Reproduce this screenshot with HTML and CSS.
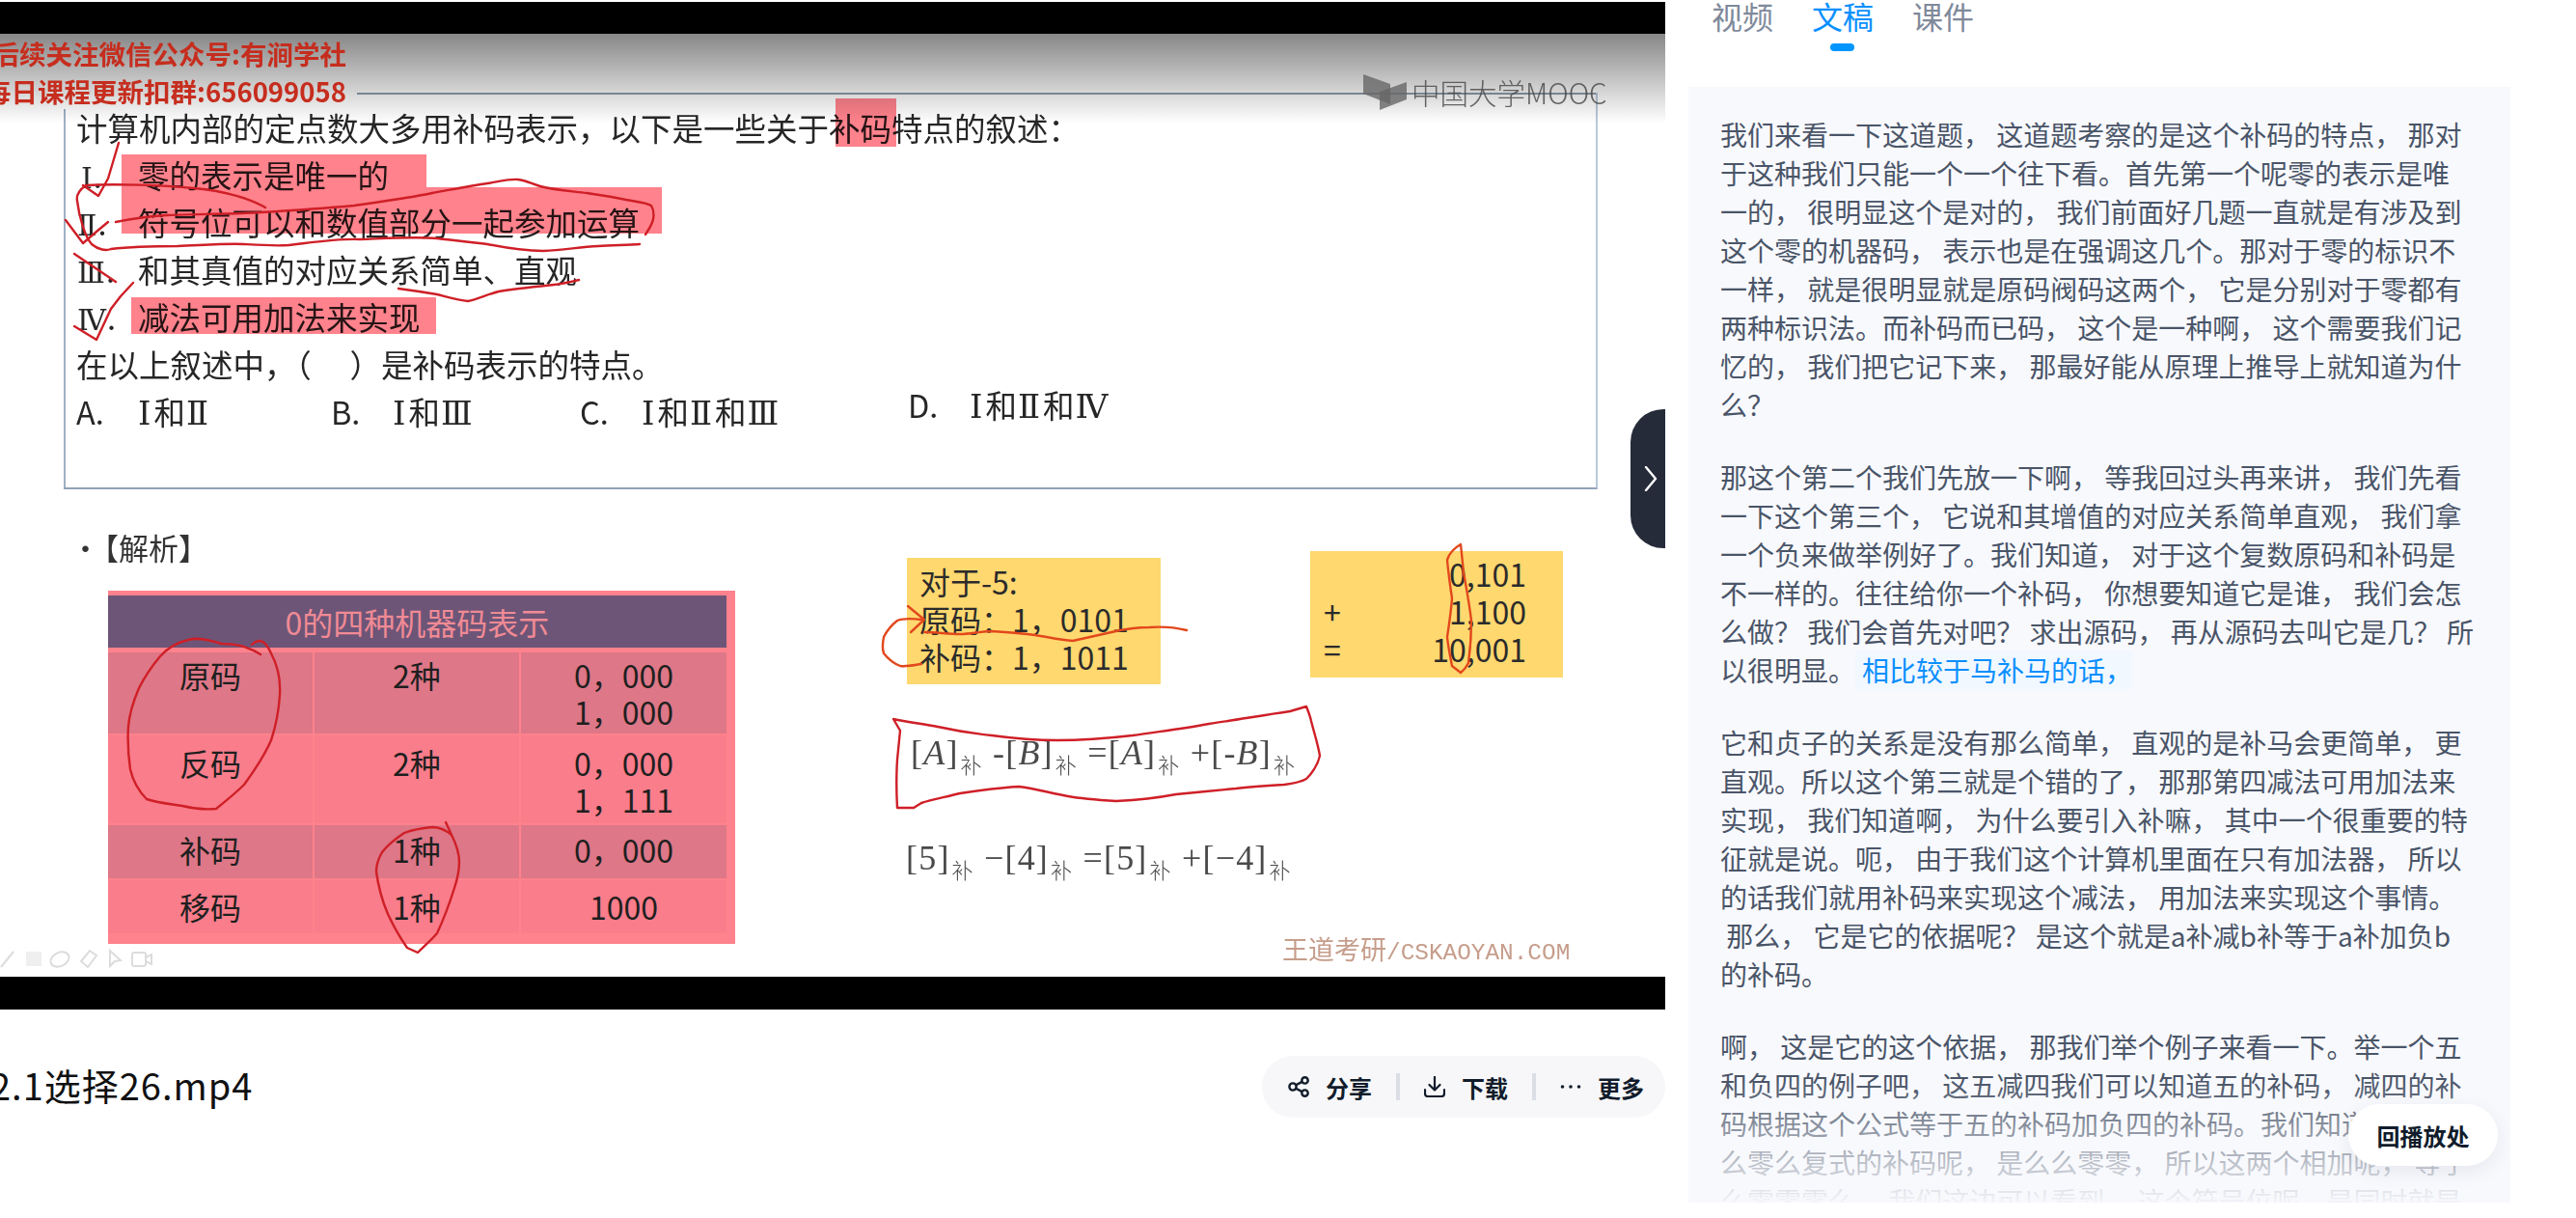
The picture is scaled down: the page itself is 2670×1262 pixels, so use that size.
FILE: index.html

```html
<!DOCTYPE html>
<html lang="zh-CN">
<head>
    <meta charset="UTF-8">
    <title>2.1选择26.mp4</title>
    <link rel="stylesheet" href="styles.css">
</head>
<body>
    <div class="page">
        <main class="main-col">
            <div class="video">
                <div class="slide">
                    <div class="q-box">
                        <div class="q-line">计算机内部的定点数大多用补码表示&#65292;以下是一些关于补码特点的叙述&#65306;</div>
                        <div class="q-line q-row"><span class="q-key q-key-one"><span class="num">Ⅰ</span>.</span><span>零的表示是唯一的</span></div>
                        <div class="q-line q-row"><span class="q-key"><span class="num">Ⅱ</span>.</span><span>符号位可以和数值部分一起参加运算</span></div>
                        <div class="q-line q-row"><span class="q-key"><span class="num">Ⅲ</span>.</span><span>和其真值的对应关系简单、直观</span></div>
                        <div class="q-line q-row"><span class="q-key"><span class="num">Ⅳ</span>.</span><span>减法可用加法来实现</span></div>
                        <div class="q-line">在以上叙述中&#65292;&#65288;&#12288;&nbsp;&#65289;是补码表示的特点。</div>
                        <div class="q-options">
                            <div class="q-opt"><span class="q-opt-key">A.</span><span class="num">Ⅰ</span>和<span class="num">Ⅱ</span></div>
                            <div class="q-opt"><span class="q-opt-key">B.</span><span class="num">Ⅰ</span>和<span class="num">Ⅲ</span></div>
                            <div class="q-opt"><span class="q-opt-key">C.</span><span class="num">Ⅰ</span>和<span class="num">Ⅱ</span>和<span class="num">Ⅲ</span></div>
                            <div class="q-opt q-opt-d"><span class="q-opt-key">D.</span><span class="num">Ⅰ</span>和<span class="num">Ⅱ</span>和<span class="num">Ⅳ</span></div>
                        </div>
                    </div>

                    <div class="mark mark-kw"></div>
                    <div class="mark mark-one"></div>
                    <div class="mark mark-two"></div>
                    <div class="mark mark-four"></div>

                    <div class="answer-head"><span class="answer-dot">•</span>【解析】</div>

                    <div class="zero-table">
                        <div class="zt-head">0的四种机器码表示</div>
                        <div class="zt-cell zt-dark zt-r1">原码</div>
                        <div class="zt-cell zt-dark zt-r1">2种</div>
                        <div class="zt-cell zt-dark zt-r1">0&#65292;000<br>1&#65292;000</div>
                        <div class="zt-cell zt-r2">反码</div>
                        <div class="zt-cell zt-r2">2种</div>
                        <div class="zt-cell zt-r2">0&#65292;000<br>1&#65292;111</div>
                        <div class="zt-cell zt-dark zt-r3">补码</div>
                        <div class="zt-cell zt-dark zt-r3">1种</div>
                        <div class="zt-cell zt-dark zt-r3">0&#65292;000</div>
                        <div class="zt-cell zt-r4">移码</div>
                        <div class="zt-cell zt-r4">1种</div>
                        <div class="zt-cell zt-r4">1000</div>
                    </div>

                    <div class="note note-codes">
                        <div>对于-5:</div>
                        <div>原码&#65306;1&#65292;0101</div>
                        <div>补码&#65306;1&#65292;1011</div>
                    </div>

                    <div class="note note-sum">
                        <div class="sum-row"><span></span><span>0,101</span></div>
                        <div class="sum-row"><span>+</span><span>1,100</span></div>
                        <div class="sum-row"><span>=</span><span>10,001</span></div>
                    </div>

                    <div class="formula formula-a">[<i>A</i>]<span class="fm-sub">补</span> -[<i>B</i>]<span class="fm-sub">补</span> =[<i>A</i>]<span class="fm-sub">补</span> +[-<i>B</i>]<span class="fm-sub">补</span></div>
                    <div class="formula formula-b">[5]<span class="fm-sub">补</span> −[4]<span class="fm-sub">补</span> =[5]<span class="fm-sub">补</span> +[−4]<span class="fm-sub">补</span></div>

                    <div class="site-mark">王道考研<span class="site-mark-url">/CSKAOYAN.COM</span></div>

                    <div class="top-fade"></div>

                    <div class="wechat-mark">
                        <div>后续关注微信公众号:有涧学社</div>
                        <div>每日课程更新扣群:656099058</div>
                    </div>

                    <div class="mooc-mark">
                        <svg width="46" height="38" viewBox="0 0 46 38">
                            <path d="M0 0 L28 10 L28 31 L0 20 Z" fill="#666" opacity="0.8"/>
                            <path d="M45 8 L45 26 L17 37 L17 18 Z" fill="#666" opacity="0.8"/>
                        </svg>
                        <span class="mooc-name">中国大学MOOC</span>
                    </div>

                    <!-- hand drawn pen strokes, coords are page px -->
                    <svg class="ink" width="1726" height="977" viewBox="0 35 1726 977" fill="none">
                        <g stroke="#cf1f27" stroke-width="2.4" stroke-linejoin="round" stroke-linecap="round">
                            <path d="M123 148 L112 185 L102 203 L86 192"/>
                            <path d="M275 215 C262 207 235 198 201 195 C170 192 120 190 89 192 C82 197 79 203 80 208 C82 225 88 245 95 253 C102 259 110 260 115 258 C140 255 160 255 184 255 C210 254 235 252 253 253 C270 254 285 255 299 254 C325 251 350 247 373 248 C400 247 430 245 453 247 C470 249 490 251 505 253 C525 257 545 260 563 260 C585 259 600 256 620 255 C635 254 650 254 663 253"/>
                            <path d="M120 230 C140 226 155 224 172 223 C200 222 240 222 270 220 C305 218 335 216 367 213 C395 209 425 205 448 200 C470 196 490 192 505 190 C518 188 528 185 537 186 C546 187 552 191 560 193 C575 197 592 198 608 200 C622 202 636 204 649 207 C660 209 670 210 675 213 C678 218 678 222 677 227 C676 233 672 238 669 243"/>
                            <path d="M68 228 L86 252 L100 240 L112 230"/>
                            <path d="M77 263 L120 292"/>
                            <path d="M413 299 C428 301 441 303 453 305 C465 308 475 311 485 312 C495 310 505 305 517 302 C535 299 555 297 574 295 C584 294 592 292 600 290"/>
                            <path d="M138 293 L125 307 L115 320 L100 352 L77 338"/>

                            <path d="M270 678 C258 670 244 667 230 667 C217 663 205 660 195 663 C183 666 173 672 166 680 C156 692 149 703 144 713 C138 727 134 740 133 753 C132 768 133 783 135 797 C138 810 144 820 152 828 C164 832 176 833 189 835 C201 838 213 839 224 838 C234 830 244 822 253 813 C264 798 274 783 281 767 C286 752 289 736 290 720 C291 704 288 690 281 677 C278 670 274 665 270 664 C266 664 263 666 261 668"/>
                            <path d="M462 852 L468 865 C462 860 455 857 448 857 C438 858 427 860 419 863 C410 869 402 875 396 883 C392 890 390 896 390 903 C392 918 396 933 402 947 C408 960 415 972 422 982 L433 987 C440 980 447 974 453 967 C460 952 466 936 471 920 C474 911 476 902 476 893 C476 882 472 873 468 865"/>

                            <path d="M926 745 C940 748 956 750 972 753 C990 757 1009 760 1028 762 C1050 765 1073 767 1096 767 C1122 767 1148 765 1174 762 C1200 758 1227 755 1253 750 C1281 746 1309 741 1337 737 L1354 732 C1356 737 1358 742 1359 747 C1362 759 1366 771 1368 783 C1366 792 1361 800 1354 807 C1347 811 1339 812 1331 813 C1314 814 1297 815 1281 817 C1260 819 1240 821 1219 823 C1198 827 1178 829 1157 830 C1140 829 1123 828 1107 825 C1090 822 1073 817 1056 815 C1036 816 1015 819 995 822 C980 826 966 828 955 832 L947 837 L930 837 C929 820 929 803 930 787 L933 757 L926 745 Z"/>
                        </g>
                        <g stroke="#e2481c" stroke-width="2.4" stroke-linejoin="round" stroke-linecap="round">
                            <path d="M955 688 C948 689 940 691 933 690 C925 687 920 682 916 677 C914 671 915 665 916 660 C920 652 925 647 930 643 C938 640 947 641 955 642"/>
                            <path d="M941 628 L958 642 L944 655"/>
                            <path d="M958 655 C970 655 983 657 995 657 C1006 657 1017 654 1028 654 C1043 655 1058 656 1073 658 C1086 660 1099 663 1112 664 C1125 661 1139 658 1152 655 C1165 652 1178 650 1191 650 C1205 649 1218 650 1230 653"/>
                            <path d="M1514 564 C1507 568 1502 574 1500 580 C1501 593 1503 606 1505 620 C1504 633 1502 647 1500 660 C1501 670 1503 680 1505 690 L1514 697 C1518 694 1520 691 1522 687 C1524 672 1525 658 1525 643 C1523 626 1520 610 1517 593 C1516 583 1515 574 1514 564 Z"/>
                        </g>
                        <g stroke="#dcdcdc" stroke-width="2">
                            <path d="M1 1002 L14 986"/>
                            <rect x="27" y="986" width="16" height="15" fill="#efefef" stroke="none"/>
                            <ellipse cx="62" cy="994" rx="10" ry="7" transform="rotate(-25 62 994)"/>
                            <path d="M84 996 L93 985 L100 990 L91 1002 Z"/>
                            <path d="M114 985 L114 1001 L119 996 L125 995 Z"/>
                            <rect x="137" y="987" width="14" height="14" rx="2"/>
                            <path d="M151 992 L157 989 L157 999 L151 996"/>
                        </g>
                    </svg>
                </div>
                <button class="collapse-tab" aria-label="收起">
                    <svg width="14" height="26" viewBox="0 0 14 26" fill="none"><path d="M2 1 L12 13 L2 25" stroke="#fff" stroke-width="2.4" stroke-linecap="round" stroke-linejoin="round"/></svg>
                </button>
            </div>

            <div class="video-meta">
                <div class="video-title">2.1选择26.mp4</div>
                <div class="actions">
                    <div class="action">
                        <svg width="22" height="22" viewBox="0 0 22 22" fill="none" stroke="#111c2b" stroke-width="2.4"><circle cx="5" cy="11" r="3.6"/><circle cx="17.5" cy="4.4" r="3.2"/><circle cx="17.5" cy="17.6" r="3.2"/><path d="M8.2 9.3 L14.6 5.9 M8.2 12.7 L14.6 16.1"/></svg>
                        <span>分享</span>
                    </div>
                    <span class="action-divider"></span>
                    <div class="action">
                        <svg width="22" height="22" viewBox="0 0 22 22" fill="none" stroke="#111c2b" stroke-width="2.2" stroke-linecap="round" stroke-linejoin="round"><path d="M11 1 V14 M5.5 9 L11 14.5 L16.5 9"/><path d="M1 14 V18 C1 20 2 21 4 21 H18 C20 21 21 20 21 18 V14"/></svg>
                        <span>下载</span>
                    </div>
                    <span class="action-divider"></span>
                    <div class="action">
                        <svg width="22" height="22" viewBox="0 0 22 22" fill="#111c2b"><circle cx="2.5" cy="11" r="1.8"/><circle cx="11" cy="11" r="1.8"/><circle cx="19.5" cy="11" r="1.8"/></svg>
                        <span>更多</span>
                    </div>
                </div>
            </div>
        </main>

        <aside class="side-col">
            <nav class="tabs">
                <div class="tab">视频</div>
                <div class="tab tab-active">文稿</div>
                <div class="tab">课件</div>
            </nav>
            <section class="transcript">
                <p>我们来看一下这道题&#65292; 这道题考察的是这个补码的特点&#65292; 那对于这种我们只能一个一个往下看。首先第一个呢零的表示是唯一的&#65292; 很明显这个是对的&#65292; 我们前面好几题一直就是有涉及到这个零的机器码&#65292; 表示也是在强调这几个。那对于零的标识不一样&#65292; 就是很明显就是原码阀码这两个&#65292; 它是分别对于零都有两种标识法。而补码而已码&#65292; 这个是一种啊&#65292; 这个需要我们记忆的&#65292; 我们把它记下来&#65292; 那最好能从原理上推导上就知道为什么&#65311;</p>
                <p>那这个第二个我们先放一下啊&#65292; 等我回过头再来讲&#65292; 我们先看一下这个第三个&#65292; 它说和其增值的对应关系简单直观&#65292; 我们拿一个负来做举例好了。我们知道&#65292; 对于这个复数原码和补码是不一样的。往往给你一个补码&#65292; 你想要知道它是谁&#65292; 我们会怎么做&#65311; 我们会首先对吧&#65311; 求出源码&#65292; 再从源码去叫它是几&#65311; 所以很明显。<span class="t-current">相比较于马补马的话&#65292;</span></p>
                <p>它和贞子的关系是没有那么简单&#65292; 直观的是补马会更简单&#65292; 更直观。所以这个第三就是个错的了&#65292; 那那第四减法可用加法来实现&#65292; 我们知道啊&#65292; 为什么要引入补嘛&#65292; 其中一个很重要的特征就是说。呃&#65292; 由于我们这个计算机里面在只有加法器&#65292; 所以的话我们就用补码来实现这个减法&#65292; 用加法来实现这个事情。<br>&nbsp;那么&#65292; 它是它的依据呢&#65311; 是这个就是a补减b补等于a补加负b的补码。</p>
                <p>啊&#65292; 这是它的这个依据&#65292; 那我们举个例子来看一下。举一个五和负四的例子吧&#65292; 这五减四我们可以知道五的补码&#65292; 减四的补码根据这个公式等于五的补码加负四的补码。我们知道五是零么零么复式的补码呢&#65292; 是么么零零&#65292; 所以这两个相加呢&#65292; 等于么零零零么&#65292; 我们这边可以看到&#65292; 这个符号位呢。是同时就是</p>
                <div class="transcript-fade"></div>
                <button class="replay-btn">回播放处</button>
            </section>
        </aside>
    </div>
</body>
</html>
```

FILE: styles.css

```css
* {
    box-sizing: border-box;
}
body {
    margin: 0;
    background: #fff;
    font-family: "Noto Sans CJK SC", "Noto Sans", sans-serif;
    overflow: hidden;
}
.page {
    display: flex;
    width: 2670px;
    height: 1262px;
    overflow: hidden;
}
.main-col {
    width: 1726px;
    flex: none;
    padding-top: 2px;
}

/* video */
.video {
    position: relative;
    height: 1044px;
    background: #000;
    padding: 33px 0 34px;
    display: flex;
}
.slide {
    position: relative;
    flex: 1;
    background: #fff;
    overflow: hidden;
    color: #262626;
    font-size: 32.5px;
    filter: blur(0.5px);
}
.q-box {
    position: absolute;
    left: 66px;
    top: 61px;
    width: 1590px;
    height: 411px;
    border-right: 2px solid #b9c8db;
    border-bottom: 2px solid #93a3b8;
    padding: 11px 0 0 13px;
}
.q-box::before {
    content: "";
    position: absolute;
    left: 304px;
    right: 0;
    top: 0;
    height: 2px;
    background: #8f9eac;
}
.q-box::after {
    content: "";
    position: absolute;
    left: 0;
    top: 17px;
    bottom: 0;
    width: 2px;
    background: #9fb0c4;
}
.q-line {
    height: 49px;
    line-height: 49px;
    white-space: nowrap;
}
.q-row {
    display: flex;
}
.q-key {
    width: 64px;
}
.q-key-one {
    padding-left: 4px;
}
.num {
    font-family: "DejaVu Serif", serif;
    font-size: 34px;
    line-height: 40px;
    padding: 0 3px 0 1px;
}
.q-key .num {
    font-size: 30px;
    padding: 0 1px 0 1px;
}
.q-options {
    display: grid;
    grid-template-columns: 264px 258px 340px auto;
    height: 49px;
    line-height: 49px;
}
.q-opt {
    white-space: nowrap;
}
.q-opt-d {
    margin-top: -7px;
}
.q-opt-key {
    display: inline-block;
    width: 63px;
}

.mark {
    position: absolute;
    background: #ff828c;
    mix-blend-mode: multiply;
}
.mark-kw {
    left: 866px;
    top: 67px;
    width: 63px;
    height: 50px;
}
.mark-one {
    left: 126px;
    top: 125px;
    width: 316px;
    height: 34px;
}
.mark-two {
    left: 126px;
    top: 159px;
    width: 560px;
    height: 48px;
}
.mark-four {
    left: 136px;
    top: 273px;
    width: 316px;
    height: 38px;
}

.answer-head {
    position: absolute;
    left: 73px;
    top: 507px;
    line-height: 50px;
    font-size: 31px;
    display: flex;
    color: #333;
}
.answer-dot {
    width: 19px;
}

.zero-table {
    position: absolute;
    left: 112px;
    top: 577px;
    width: 650px;
    height: 366px;
    padding: 5px 10px 0 0;
    background: #ff828c;
    display: grid;
    grid-template-columns: 212px 212px 213px;
    grid-template-rows: 54px 87px 91px 55px 55px;
    column-gap: 2px;
    row-gap: 2px;
    align-content: start;
    font-size: 32px;
    line-height: 38px;
    color: #1f1f1f;
    text-align: center;
}
.zt-head {
    grid-column: 1 / 4;
    margin-bottom: 3px;
    height: 54px;
    line-height: 54px;
    background: #6d5578;
    color: #f08a94;
}
.zt-cell {
    background: #f97d8b;
    padding-top: 7px;
}
.zt-dark {
    background: #de7787;
}
.zt-r1 {
    margin-top: 3px;
    padding-top: 4px;
}
.zt-r2 {
    padding-top: 9px;
}
.zt-r3 {
    padding-top: 6px;
}
.zt-r4 {
    padding-top: 8px;
}

.note {
    position: absolute;
    background: #ffd86f;
    font-size: 32px;
    line-height: 39px;
    color: #2b2b2b;
}
.note-codes {
    left: 940px;
    top: 543px;
    width: 263px;
    height: 131px;
    padding: 5px 0 0 13px;
}
.note-sum {
    left: 1358px;
    top: 536px;
    width: 262px;
    height: 131px;
    padding: 4px 38px 0 14px;
}
.sum-row {
    display: flex;
    justify-content: space-between;
    height: 39px;
}

.formula {
    position: absolute;
    font-family: "Liberation Serif", serif;
    font-size: 36px;
    line-height: 50px;
    letter-spacing: 1.2px;
    color: #4a4a4a;
    white-space: nowrap;
}
.formula-a {
    left: 944px;
    top: 720px;
}
.formula-b {
    left: 939px;
    top: 829px;
}
.fm-sub {
    font-family: "Noto Sans CJK SC", sans-serif;
    font-size: 22px;
    font-weight: 300;
    vertical-align: -9px;
    margin-left: 2px;
}

.site-mark {
    position: absolute;
    left: 1329px;
    top: 928px;
    font-size: 27px;
    line-height: 40px;
    color: #c69d8b;
    white-space: nowrap;
}
.site-mark-url {
    font-family: "Liberation Mono", monospace;
    font-size: 24.4px;
}

.top-fade {
    position: absolute;
    left: 0;
    right: 0;
    top: 0;
    height: 93px;
    background: linear-gradient(rgba(0, 0, 0, 0.47), rgba(0, 0, 0, 0));
}
.wechat-mark {
    position: absolute;
    left: 0;
    top: 1px;
    width: 359px;
    display: flex;
    flex-direction: column;
    align-items: flex-end;
    font-size: 27.5px;
    font-weight: 700;
    line-height: 39px;
    color: #c62d1e;
    white-space: nowrap;
}
.mooc-mark {
    position: absolute;
    left: 1413px;
    top: 42px;
    display: flex;
    align-items: flex-start;
    gap: 4px;
    color: #444;
}
.mooc-name {
    font-size: 29.5px;
    font-weight: 300;
    line-height: 36px;
    opacity: 0.8;
}
.ink {
    position: absolute;
    left: 0;
    top: 0;
}

.collapse-tab {
    position: absolute;
    right: 0;
    top: 422px;
    width: 36px;
    height: 144px;
    border: 0;
    padding: 0 0 0 14px;
    background: #262b3a;
    border-radius: 34px 0 0 34px;
    display: flex;
    align-items: center;
}

/* below the video */
.video-meta {
    display: flex;
    justify-content: space-between;
    align-items: center;
    padding-top: 48px;
}
.video-title {
    margin-left: -10px;
    padding-bottom: 4px;
    font-size: 38px;
    line-height: 60px;
    letter-spacing: 1px;
    color: #111;
    white-space: nowrap;
}
.actions {
    height: 64px;
    width: 418px;
    padding-left: 27px;
    border-radius: 32px;
    background: #f7f7f9;
    display: flex;
    align-items: center;
    gap: 25px;
    font-size: 24px;
    font-weight: 700;
    color: #111c2b;
}
.action {
    display: flex;
    align-items: center;
    gap: 17px;
}
.action-divider {
    width: 4px;
    height: 28px;
    background: #dcdee6;
}

/* right column */
.side-col {
    width: 852px;
    margin-left: 24px;
    flex: none;
}
.tabs {
    height: 90px;
    display: flex;
    gap: 40px;
    padding-left: 24px;
}
.tab {
    position: relative;
    font-size: 32px;
    line-height: 32px;
    color: #7f8a9b;
}
.tab-active {
    color: #0a90ff;
}
.tab-active::after {
    content: "";
    position: absolute;
    left: 19px;
    top: 45px;
    width: 25px;
    height: 8px;
    border-radius: 4px;
    background: #0095ff;
}
.transcript {
    position: relative;
    height: 1156px;
    overflow: hidden;
    padding: 29px 36px 0 33px;
    background: #f8f9fd;
    font-size: 28px;
    line-height: 40px;
    color: #4a5568;
}
.transcript p {
    margin: 0 0 35px;
}
.t-current {
    padding-left: 7px;
    background: #f2f8ff;
    color: #0a8fff;
}
.transcript-fade {
    position: absolute;
    left: 0;
    right: 0;
    bottom: 0;
    height: 126px;
    background: linear-gradient(rgba(248, 249, 253, 0), rgba(248, 249, 253, 0.97));
}
.replay-btn {
    position: absolute;
    right: 13px;
    bottom: 38px;
    width: 155px;
    height: 64px;
    border: 0;
    border-radius: 32px;
    background: #fff;
    box-shadow: 0 6px 20px rgba(30, 40, 70, 0.08);
    font-family: inherit;
    font-size: 24px;
    font-weight: 700;
    color: #111c2b;
}
```
